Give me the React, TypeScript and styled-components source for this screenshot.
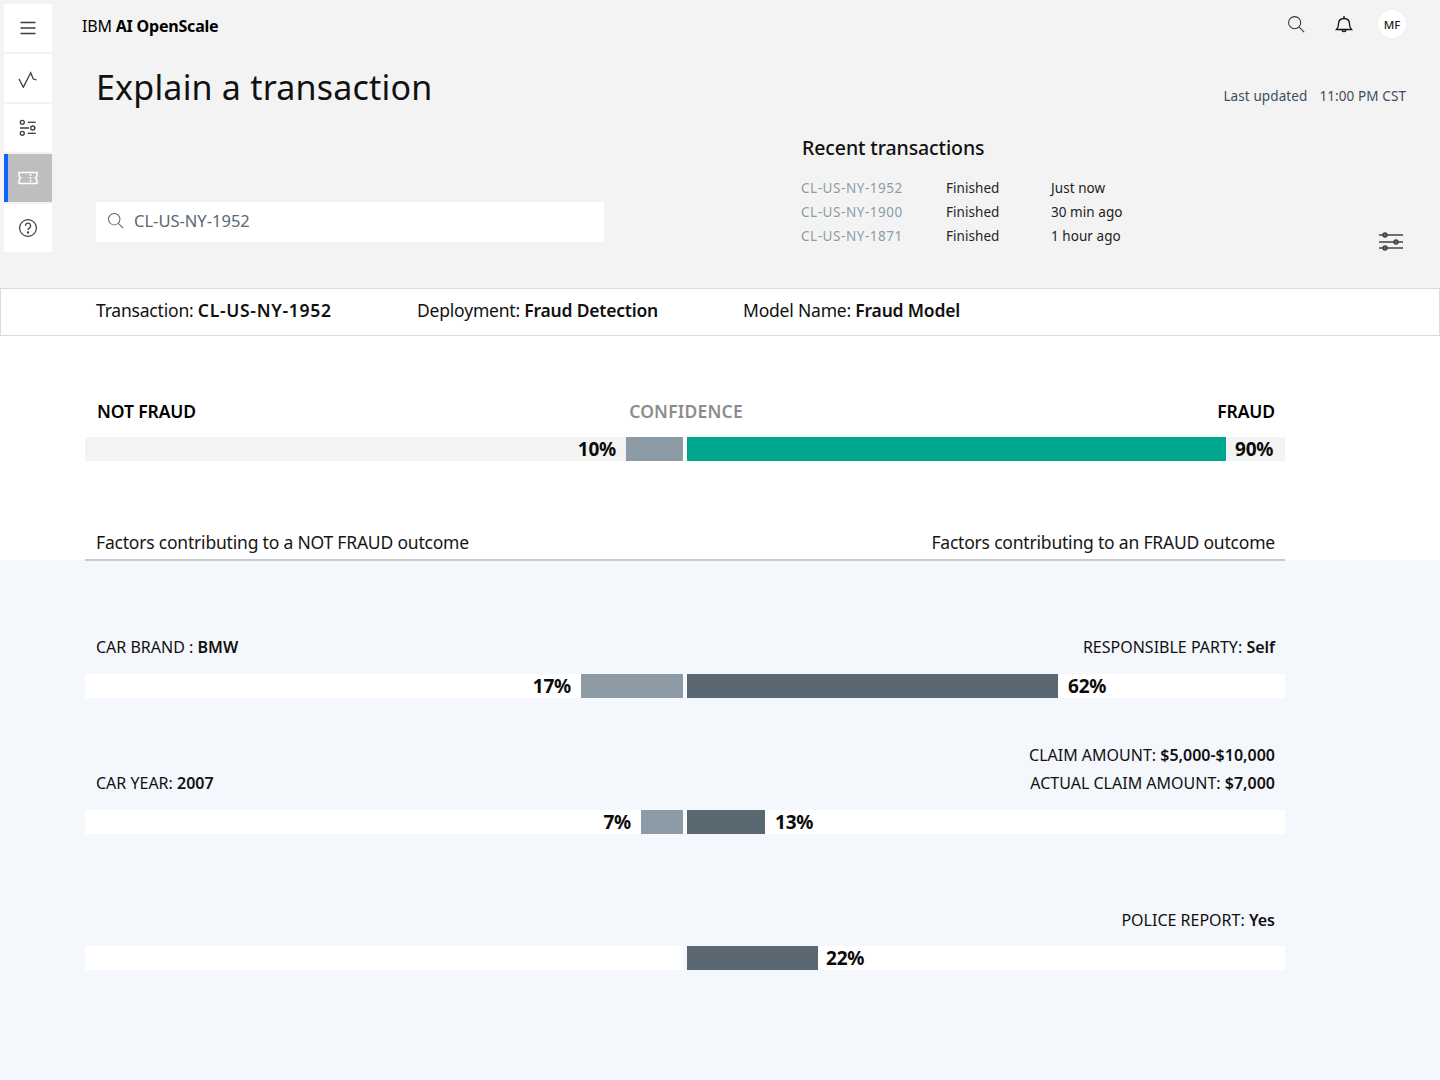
import React from "react";
import styled, { createGlobalStyle } from "styled-components";

const Global = createGlobalStyle`
  html, body { margin: 0; padding: 0; background: #fff; }
  body { font-family: "Noto Sans", "Open Sans", Arial, sans-serif; color: #000; }
  * { box-sizing: border-box; }
`;
const Page = styled.div`width: 1440px; height: 1080px; overflow: hidden; display: flex; flex-direction: column;`;
const Top = styled.div`height: 288px; background: #f3f3f3; display: flex;`;
const Rail = styled.nav`width: 48px; margin-left: 4px; padding-top: 4px; display: flex; flex-direction: column; gap: 2px; flex: none;`;
const RailItem = styled.div<{ $active?: boolean }>`
  height: 48px; width: 48px; display: flex; align-items: center; justify-content: center;
  background: ${p => (p.$active ? "#bebebe" : "#fff")};
  border-left: ${p => (p.$active ? "4px solid #0f62fe" : "0")};
  color: ${p => (p.$active ? "#fff" : "#3d3d3d")};
  padding-right: ${p => (p.$active ? "4px" : "0")};
`;
const TopMain = styled.div`flex: 1; display: flex; flex-direction: column; padding-right: 34px;`;
const Header = styled.header`height: 48px; padding: 4px 0 0 30px; display: flex; align-items: center; justify-content: space-between;`;
const Brand = styled.div`font-size: 16px; letter-spacing: -0.2px; b { font-weight: 700; }`;
const HeaderIcons = styled.div`display: grid; grid-template-columns: repeat(3, 48px); justify-items: center; align-items: center; margin: -4px -10px 0 0;`;
const Avatar = styled.div`width: 28px; height: 28px; border-radius: 50%; background: #fff; font-size: 11.5px; font-weight: 500; display: flex; align-items: center; justify-content: center; color: #1c1c1c;`;
const TitleRow = styled.div`display: flex; justify-content: space-between; padding-left: 44px; height: 94px;`;
const Title = styled.h1`margin: 17px 0 0; font-size: 34px; font-weight: 400; line-height: 44px; letter-spacing: 0.2px; color: #111;`;
const Updated = styled.div`font-size: 13.5px; color: #3d4d5c; margin-top: 39px; display: flex; gap: 12px; letter-spacing: 0.1px;`;
const Lower = styled.div`display: grid; grid-template-columns: 706px 1fr auto; padding-left: 44px;`;
const Search = styled.div`width: 508px; height: 40px; margin-top: 60px; background: #fff; display: flex; align-items: center; padding: 0 0 4px 11px; gap: 10px; color: #5a6872; font-size: 16.5px; letter-spacing: 0;`;
const Recent = styled.section`margin-top: -8px;`;
const RecentTitle = styled.h2`margin: 0 0 14px; font-size: 19.5px; font-weight: 500; line-height: 28px; letter-spacing: -0.1px; color: #111;`;
const RecentTable = styled.div`display: grid; grid-template-columns: 145px 105px 1fr; grid-auto-rows: 24px; margin-left: -1px; font-size: 13.5px; align-items: center; letter-spacing: 0.05px; color: #222;`;
const Code = styled.span`color: #8c9ba5; letter-spacing: 0.55px;`;
const Tune = styled.div`align-self: start; margin: 90px 2px 0 0; svg { display: block; }`;
const InfoBar = styled.div`height: 48px; border: 1px solid #dcdcdc; background: #fff; display: flex; align-items: center; padding: 0 0 4px 95px; font-size: 17.5px; letter-spacing: -0.2px; color: #111; b { font-weight: 600; }`;
const InfoItem = styled.div<{ $w: number }>`width: ${p => p.$w}px;`;
const TxId = styled.b`letter-spacing: 0.7px;`;
const White = styled.div`height: 224px; background: #fff; padding: 0 155px 0 85px; display: flex; flex-direction: column;`;
const ConfHead = styled.div`display: grid; grid-template-columns: 1fr auto 1fr; align-items: center; margin: 63px 0 14px; height: 24px; padding: 0 10px 0 12px; font-size: 17.5px; font-weight: 600; letter-spacing: -0.1px;`;
const Conf = styled.div`text-align: center; color: #8c8c8c; letter-spacing: 0.2px;`;
const Right = styled.div`text-align: right;`;
const BarRow = styled.div`width: 1200px; height: 24px; display: grid; grid-template-columns: 598px 598px; column-gap: 4px; flex: none;`;
const Side = styled.div<{ $bg: string; $left?: boolean; $gap?: number }>`
  background: ${p => p.$bg}; display: flex; align-items: center; height: 24px; gap: ${p => p.$gap ?? 10}px;
  justify-content: ${p => (p.$left ? "flex-end" : "flex-start")};
`;
const Fill = styled.div<{ $c: string }>`height: 24px; background: ${p => p.$c}; flex: none;`;
const Pct = styled.span`font-size: 19px; line-height: 24px; font-weight: 700; letter-spacing: -0.2px; color: #0b0b0b;`;
const FactorHead = styled.div`position: relative; z-index: 1; width: 1200px; margin-top: 70px; height: 30px; border-bottom: 2px solid #c6ccd2; display: flex; justify-content: space-between; align-items: center; padding: 0 10px 6px 11px; font-size: 17.5px; letter-spacing: -0.2px; color: #161616; flex: none;`;
const Blue = styled.div`flex: 1; background: #f4f7fb; padding: 0 155px 0 85px;`;
const Factor = styled.div<{ $h: number; $pb?: number }>`height: ${p => p.$h}px; width: 1200px; display: flex; justify-content: space-between; align-items: flex-end; padding: 0 10px ${p => p.$pb ?? 13}px 11px; font-size: 16px; line-height: 28px; color: #111; b { font-weight: 600; }`;
const RightLines = styled.div`text-align: right;`;

const stroke = { fill: "none", stroke: "currentColor", strokeWidth: 1.3 } as const;
const Icon = ({ children, size = 20 }: { children: React.ReactNode; size?: number }) => (
  <svg width={size} height={size} viewBox="0 0 20 20" {...stroke}>{children}</svg>
);
const SearchIcon = ({ size = 20, c = "currentColor" }: { size?: number; c?: string }) => (
  <svg width={size} height={size} viewBox="0 0 20 20" fill="none" stroke={c} strokeWidth={1.2}>
    <circle cx="8.5" cy="8.5" r="6.7" /><path d="M13.4 13.4 L19 19" />
  </svg>
);

const Bar = ({ l, r, main, gap }: { l?: [string, number]; r?: [string, number]; main?: boolean; gap?: number }) => (
  <BarRow>
    <Side $left $bg={main ? "#f3f3f3" : "#fff"}>
      {l && <Pct>{l[0]}</Pct>}
      {l && <Fill $c="#8d9ba7" style={{ width: l[1] }} />}
    </Side>
    <Side $gap={gap} $bg={main ? "#f3f3f3" : "#fff"}>
      {r && <Fill $c={main ? "#00a78f" : "#5a6872"} style={{ width: r[1] }} />}
      {r && <Pct>{r[0]}</Pct>}
    </Side>
  </BarRow>
);

export default function App() {
  return (
    <Page>
      <Global />
      <Top>
        <Rail>
          <RailItem><Icon><path d="M2.5 4.5h15M2.5 10h15M2.5 15.5h15" /></Icon></RailItem>
          <RailItem><Icon><path d="M1 11L5.3 19.3L12.7 4.7L15.3 11L18.7 12" /></Icon></RailItem>
          <RailItem>
            <Icon>
              <circle cx="4.3" cy="4.3" r="2" /><path d="M9.7 4.3h8" />
              <circle cx="14.7" cy="10" r="2" /><path d="M2 10h9M17.5 10h.5" />
              <circle cx="4.3" cy="15.3" r="2" /><path d="M9.7 15.3h8" />
            </Icon>
          </RailItem>
          <RailItem $active>
            <svg width="20" height="20" viewBox="0 0 20 20" fill="none" stroke="#fff" strokeWidth="1.5">
              <path d="M1 4.5h18v3.6l-1.6 1.9 1.6 1.9v3.6H1v-3.6L2.6 10 1 8.1z" />
              <path d="M12.5 6v2M12.5 9v2M12.5 12v2" />
            </svg>
          </RailItem>
          <RailItem>
            <svg width="20" height="20" viewBox="0 0 20 20" fill="none" stroke="currentColor" strokeWidth="1.2">
              <circle cx="10" cy="10" r="8.4" />
              <path d="M7.4 7.8a2.6 2.6 0 1 1 3.8 2.3c-.8.4-1.2.9-1.2 1.9" />
              <circle cx="10" cy="14.4" r=".6" fill="currentColor" />
            </svg>
          </RailItem>
        </Rail>
        <TopMain>
          <Header>
            <Brand>IBM <b>AI OpenScale</b></Brand>
            <HeaderIcons>
              <SearchIcon size={18} c="#2a3a47" />
              <svg width="20" height="20" viewBox="0 0 20 20" fill="none" stroke="#111" strokeWidth="1.3">
                <path d="M2.5 15.5c1.5-1.5 2-2.5 2-5.5 0-3.2 2-5.5 5.5-5.5s5.5 2.3 5.5 5.5c0 3 .5 4 2 5.5z" />
                <path d="M10 4.5V2M8 15.5a2 2 0 0 0 4 0" />
              </svg>
              <Avatar>MF</Avatar>
            </HeaderIcons>
          </Header>
          <TitleRow>
            <Title>Explain a transaction</Title>
            <Updated><span>Last updated</span><span>11:00 PM CST</span></Updated>
          </TitleRow>
          <Lower>
            <Search>
              <SearchIcon size={17} c="#5a6872" />
              <span>CL-US-NY-1952</span>
            </Search>
            <Recent>
              <RecentTitle>Recent transactions</RecentTitle>
              <RecentTable>
                <Code>CL-US-NY-1952</Code><span>Finished</span><span>Just now</span>
                <Code>CL-US-NY-1900</Code><span>Finished</span><span>30 min ago</span>
                <Code>CL-US-NY-1871</Code><span>Finished</span><span>1 hour ago</span>
              </RecentTable>
            </Recent>
            <Tune>
              <svg width="26" height="20" viewBox="0 0 26 20" fill="none" stroke="#444" strokeWidth="1.6">
                <path d="M1 3h24M1 10h24M1 16h24" />
                <circle cx="7" cy="3" r="2" fill="#666" strokeWidth="1.5" />
                <circle cx="18" cy="10" r="2" fill="#666" strokeWidth="1.5" />
                <circle cx="7" cy="16" r="2" fill="#666" strokeWidth="1.5" />
              </svg>
            </Tune>
          </Lower>
        </TopMain>
      </Top>
      <InfoBar>
        <InfoItem $w={321}>Transaction: <TxId>CL-US-NY-1952</TxId></InfoItem>
        <InfoItem $w={326}>Deployment: <b>Fraud Detection</b></InfoItem>
        <InfoItem $w={300}>Model Name: <b>Fraud Model</b></InfoItem>
      </InfoBar>
      <White>
        <ConfHead><div>NOT FRAUD</div><Conf>CONFIDENCE</Conf><Right>FRAUD</Right></ConfHead>
        <Bar main l={["10%", 57]} r={["90%", 539]} gap={9} />
        <FactorHead><span>Factors contributing to a NOT FRAUD outcome</span><span>Factors contributing to an FRAUD outcome</span></FactorHead>
      </White>
      <Blue>
        <Factor $h={114}><span>CAR BRAND : <b>BMW</b></span><span>RESPONSIBLE PARTY: <b>Self</b></span></Factor>
        <Bar l={["17%", 102]} r={["62%", 371]} />
        <Factor $h={112}>
          <span>CAR YEAR: <b>2007</b></span>
          <RightLines><div>CLAIM AMOUNT: <b>$5,000-$10,000</b></div><div>ACTUAL CLAIM AMOUNT: <b>$7,000</b></div></RightLines>
        </Factor>
        <Bar l={["7%", 42]} r={["13%", 78]} />
        <Factor $h={112} $pb={12}><span /><span>POLICE REPORT: <b>Yes</b></span></Factor>
        <Bar r={["22%", 131]} gap={8} />
      </Blue>
    </Page>
  );
}
